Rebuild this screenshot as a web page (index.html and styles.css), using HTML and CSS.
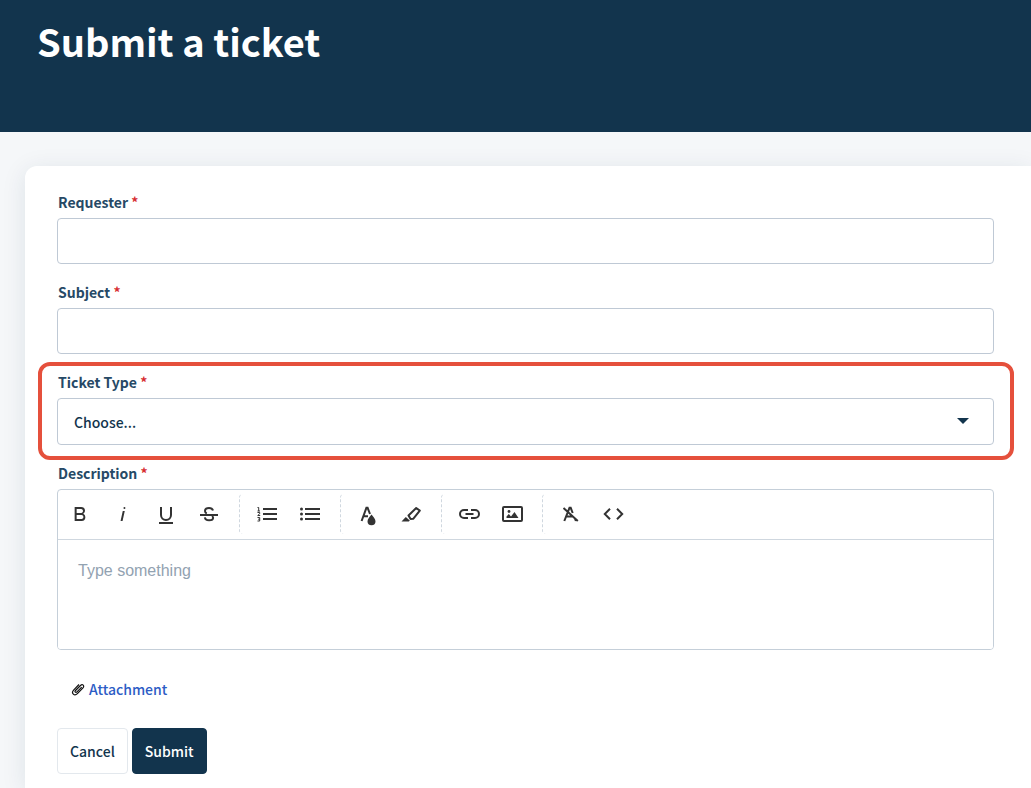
FILE: index.html
```html
<!DOCTYPE html>
<html lang="en">
<head>
    <meta charset="UTF-8">
    <meta name="viewport" content="width=device-width, initial-scale=1.0">
    <title>Submit a ticket</title>
    <link rel="stylesheet" href="styles.css">
</head>
<body>
    <header class="page-header">
        <h1>Submit a ticket</h1>
    </header>

    <main class="page-main">
        <form class="ticket-form">
            <div class="form-group">
                <label for="requester">Requester <span class="required">*</span></label>
                <input type="text" id="requester" class="form-control" required>
            </div>

            <div class="form-group">
                <label for="subject">Subject <span class="required">*</span></label>
                <input type="text" id="subject" class="form-control" required>
            </div>

            <div class="form-group highlight">
                <label for="ticketType">Ticket Type <span class="required">*</span></label>
                <div class="select-wrap">
                    <select id="ticketType" class="form-control" required>
                        <option>Choose...</option>
                    </select>
                    <svg class="caret" width="12" height="6" viewBox="0 0 12 6"><path d="M0 0h12L6 6z"/></svg>
                </div>
            </div>

            <div class="form-group">
                <label for="description">Description <span class="required">*</span></label>
                <div class="editor">
                    <div class="toolbar">
                        <div class="tool-group">
                            <button type="button" class="tool-btn" aria-label="Bold">
                                <svg viewBox="0 0 24 24"><path d="M15.25,11.8h0A3.68,3.68,0,0,0,17,9a3.93,3.93,0,0,0-3.86-4H6.65V19h7a3.74,3.74,0,0,0,3.7-3.78V15.1A3.64,3.64,0,0,0,15.25,11.8ZM8.65,7h4.2a2.09,2.09,0,0,1,2,1.3,2.09,2.09,0,0,1-1.37,2.61,2.23,2.23,0,0,1-.63.09H8.65Zm4.6,10H8.65V13h4.6a2.09,2.09,0,0,1,2,1.3,2.09,2.09,0,0,1-1.37,2.61A2.23,2.23,0,0,1,13.25,17Z"/></svg>
                            </button>
                            <button type="button" class="tool-btn" aria-label="Italic">
                                <svg viewBox="0 0 24 24"><path d="M11.76,9h2l-2.2,10h-2Zm1.68-4a1,1,0,1,0,1,1,1,1,0,0,0-1-1Z"/></svg>
                            </button>
                            <button type="button" class="tool-btn" aria-label="Underline">
                                <svg viewBox="0 0 24 24"><path class="line" d="M7 5v8a5 5 0 0 0 10 0V5M5 21h14"/></svg>
                            </button>
                            <button type="button" class="tool-btn" aria-label="Strikethrough">
                                <svg viewBox="0 0 24 24"><path class="line" d="M3 13h18M16 8.500C15.500 6.800 14 6 12 6c-2.300 0-4 1.200-4 3 0 1.200.6 2 1.800 2.500M15 14c.8.5 1.100 1.100 1.100 1.700 0 1.500-1.700 2.500-4 2.500-2.400 0-4-1-4.200-2.900"/></svg>
                            </button>
                        </div>
                        <div class="tool-group">
                            <button type="button" class="tool-btn" aria-label="Ordered list">
                                <svg viewBox="0 0 24 24"><path class="line" d="M8 7h14M8 12h14M8 17h14"/><path class="thin" d="M2.500 5.500h1.200v3.500M2.500 9h2.500M2.500 10.500h2.200v1.200l-2 1.800h2.500M2.500 15.500h2.200v3.500H2.500M3.200 17.200h1.500"/></svg>
                            </button>
                            <button type="button" class="tool-btn" aria-label="Unordered list">
                                <svg viewBox="0 0 24 24"><path class="line" d="M7 7h15M7 12h15M7 17h15"/><circle cx="3.500" cy="7" r="1.500"/><circle cx="3.500" cy="12" r="1.500"/><circle cx="3.500" cy="17" r="1.500"/></svg>
                            </button>
                        </div>
                        <div class="tool-group">
                            <button type="button" class="tool-btn" aria-label="Text color">
                                <svg viewBox="0 0 24 24"><path class="line" d="M5.600 19L10.400 5.800h1.200L14 12M7.500 14.200h4.500"/><path d="M15.500 12.500c1.500 2 4 4.500 4 6.800a4 4 0 0 1-8 0c0-2.300 2.500-4.800 4-6.800z"/></svg>
                            </button>
                            <button type="button" class="tool-btn" aria-label="Background color">
                                <svg viewBox="0 0 24 24"><path class="line" stroke-linejoin="round" d="M9.500 13.500L17.200 6l3.600 2.600-6.600 8.200-2.600.2z"/><path d="M6.800 15l4 3.500-1 1H2.500z"/></svg>
                            </button>
                        </div>
                        <div class="tool-group">
                            <button type="button" class="tool-btn" aria-label="Insert link">
                                <svg viewBox="0 0 24 24"><path class="line" d="M11 8H7a4 4 0 0 0 0 8h4M14 8h4a4 4 0 0 1 0 8h-4M8.500 12h8"/></svg>
                            </button>
                            <button type="button" class="tool-btn" aria-label="Insert image">
                                <svg viewBox="0 0 24 24"><rect class="line" x="3" y="5" width="19" height="14" rx="1"/><circle cx="9" cy="9.500" r="1.400"/><path d="M6.500 16v-1.500l2.300-2.500 2.200 2.500 3.500-4.500 4 6z"/></svg>
                            </button>
                        </div>
                        <div class="tool-group">
                            <button type="button" class="tool-btn" aria-label="Clear formatting">
                                <svg viewBox="0 0 24 24"><path class="line" d="M6.300 19l5.200-13.200h1.200l2 5.200M16.700 16l1.200 3M8.300 14.500h6M5.500 6l14.300 13"/></svg>
                            </button>
                            <button type="button" class="tool-btn" aria-label="Code view">
                                <svg viewBox="0 0 24 24"><path class="line" d="M9 6.800L3.800 12 9 17.200M16 6.800l5.200 5.200-5.200 5.200"/></svg>
                            </button>
                        </div>
                    </div>
                    <textarea id="description" placeholder="Type something" required></textarea>
                </div>
            </div>

            <div class="attachment">
                <svg width="14" height="14" viewBox="0 0 14 14"><path d="M10.700 5.200L6 9.900c-1.300 1.300-2.700-.1-1.500-1.400l5-5c2-2 4.400.3 2.500 2.300l-5.600 5.800c-3 3-6.600-.5-3.800-3.500L8 2.500"/></svg>
                <a href="#">Attachment</a>
            </div>

            <div class="form-actions">
                <button type="button" class="btn">Cancel</button>
                <button type="submit" class="btn btn-primary">Submit</button>
            </div>
        </form>
    </main>
</body>
</html>
```
FILE: styles.css
```css
* {
    box-sizing: border-box;
}

body {
    margin: 0;
    background-color: #f5f7f9;
    color: #12344d;
    font-family: "Noto Sans CJK SC", "Noto Sans", sans-serif;
    font-size: 14px;
    overflow-x: hidden;
}

.page-header {
    background-color: #12344d;
    padding: 11px 37px 61px;
}

h1 {
    margin: 0;
    color: #fff;
    font-size: 38px;
    line-height: 60px;
    font-weight: 700;
}

.page-main {
    padding: 34px 0 0 25px;
}

.ticket-form {
    background-color: #fff;
    border-radius: 12px 0 0 0;
    box-shadow: 0 4px 24px rgba(18, 52, 77, 0.1);
    padding: 24px 37px 14px 32px;
}

.form-group {
    position: relative;
    margin-bottom: 16px;
}

label {
    display: block;
    color: #264966;
    line-height: 24px;
    font-weight: 700;
    padding: 0 0 4px 1px;
}

.required {
    color: #d72d30;
}

.form-control {
    display: block;
    width: 100%;
    height: 46px;
    padding: 0 16px;
    border: 1px solid #bfc9d5;
    border-radius: 4px;
    background-color: #fff;
    color: #12344d;
    font-family: inherit;
    font-size: 14px;
}

.select-wrap {
    position: relative;
}

select.form-control {
    appearance: none;
    height: 47px;
    font-weight: 500;
}

.caret {
    position: absolute;
    top: 20px;
    right: 25px;
    fill: #12344d;
    pointer-events: none;
}

/* red frame around the ticket type field */
.highlight::after {
    content: "";
    position: absolute;
    top: -8px;
    bottom: -15px;
    left: -19px;
    right: -20px;
    border: 4px solid #e5503c;
    border-radius: 12px;
    pointer-events: none;
}

.editor {
    border: 1px solid #c5cfd9;
    border-radius: 4px;
    overflow: hidden;
}

.toolbar {
    display: flex;
    flex-wrap: wrap;
    padding: 4px 0 5px;
    border-bottom: 1px solid #cfd7df;
}

.tool-group {
    display: flex;
    padding: 0 9px 0 5px;
    border-left: 1px dashed #cfd7df;
    border-radius: 4px;
}

.tool-group:first-child {
    padding-left: 0;
    border-left: none;
}

.tool-btn {
    display: flex;
    align-items: center;
    justify-content: center;
    width: 43px;
    height: 40px;
    padding: 0;
    border: none;
    background: none;
    cursor: pointer;
}

.tool-btn svg {
    width: 24px;
    height: 24px;
    fill: #333;
}

.tool-btn .line {
    fill: none;
    stroke: #333;
    stroke-width: 2;
}

.tool-btn .thin {
    fill: none;
    stroke: #333;
    stroke-width: 1;
}

textarea {
    display: block;
    width: 100%;
    height: 109px;
    padding: 20px;
    border: none;
    outline: none;
    resize: none;
    font-family: "Liberation Sans", Arial, sans-serif;
    font-size: 16px;
    line-height: 22px;
}

textarea::placeholder {
    color: #92a2b1;
}

.attachment {
    display: flex;
    align-items: center;
    gap: 4px;
    margin: 27px 0;
    padding-left: 14px;
    line-height: 24px;
}

.attachment svg {
    fill: none;
    stroke: #111;
    stroke-width: 1.2;
}

.attachment a {
    color: #2c5cc5;
    font-weight: 500;
    text-decoration: none;
}

.form-actions {
    display: flex;
    gap: 4px;
}

.btn {
    height: 46px;
    padding: 0 12px;
    border: 1px solid #e3e8ed;
    border-radius: 4px;
    background-color: #fff;
    color: #12344d;
    font-family: inherit;
    font-size: 14px;
    font-weight: 500;
    cursor: pointer;
}

.btn-primary {
    background-color: #12344d;
    border-color: #12344d;
    color: #fff;
}
```
